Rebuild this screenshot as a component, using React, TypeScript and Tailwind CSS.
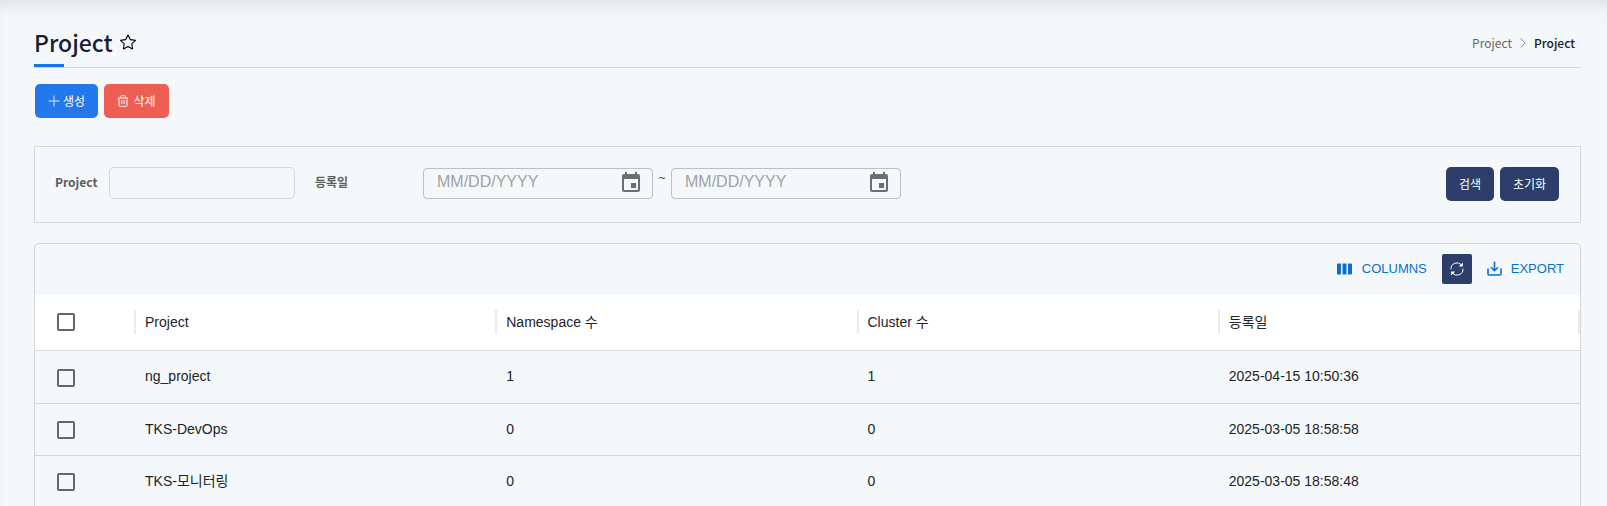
import type { ReactNode } from "react";
import { BsStar } from "react-icons/bs";
import { MdEvent } from "react-icons/md";

const kr = "font-['Noto_Sans_CJK_KR',sans-serif]";

const rows = [
  { name: "ng_project", namespaces: 1, clusters: 1, created: "2025-04-15 10:50:36" },
  { name: "TKS-DevOps", namespaces: 0, clusters: 0, created: "2025-03-05 18:58:58" },
  { name: "TKS-모니터링", namespaces: 0, clusters: 0, created: "2025-03-05 18:58:48" },
];

function Check({ label }: { label: string }) {
  return (
    <input
      type="checkbox"
      aria-label={label}
      className="ml-[22px] block size-[18px] appearance-none rounded-[2px] border-2 border-[#666666] bg-transparent checked:bg-[#0b6bcb]"
    />
  );
}

function DateField({ label }: { label: string }) {
  return (
    <div className="flex h-[31px] w-[230px] items-center rounded-[4px] border border-[#bcc0c3] pr-[9px] pb-px pl-[13px]">
      <input
        type="text"
        aria-label={label}
        placeholder="MM/DD/YYYY"
        className="min-w-0 flex-1 bg-transparent pb-[2px] text-[16px] leading-[20px] outline-none placeholder:text-[#a0a3a5]"
      />
      <button type="button" aria-label={`${label} 선택`} className="text-[#6c6f71]">
        <MdEvent className="size-6" />
      </button>
    </div>
  );
}

function HeadCell({ children }: { children: ReactNode }) {
  return (
    <th scope="col" className="p-0 text-left font-normal last:[&>div]:border-r-2">
      <div className="-ml-px flex h-6 items-center border-l-2 border-[#ececec] pl-[9px]">{children}</div>
    </th>
  );
}

export default function App() {
  return (
    <div className="min-h-screen bg-[#f4f8fb] font-['Liberation_Sans','Noto_Sans_CJK_KR',sans-serif] text-[14px] text-[#212427] shadow-[inset_0_12px_16px_-8px_rgba(0,0,0,0.1)]">
      <main className="h-screen overflow-hidden pt-[24px] pr-[26px] pl-[34px]">
        <header className={`${kr} flex h-[44px] items-end justify-between border-b border-[#d3d8dc]`}>
          <div className="relative flex h-[43px] items-center gap-[7px] pb-[8px]">
            <h1 className="text-[23px] leading-[34px] font-medium text-[#1a1c33]">Project</h1>
            <button type="button" aria-label="즐겨찾기" className="text-black">
              <BsStar className="size-[16px]" />
            </button>
            <span className="absolute bottom-0 left-0 h-[3px] w-[30px] bg-[#1573f0]" />
          </div>
          <nav aria-label="breadcrumb" className="flex h-[43px] items-center gap-[8px] pr-[6px] pb-[5px] text-[12px]">
            <a href="#project" className="text-[#666666]">Project</a>
            <svg viewBox="0 0 6 10" className="h-[10px] w-[6px]" fill="none" stroke="#888888">
              <path d="M.6.4 5.2 5 .6 9.6" />
            </svg>
            <span className="font-medium text-[#222222]">Project</span>
          </nav>
        </header>

        <div className={`${kr} mt-[16px] ml-px flex gap-[6px] text-[12px] text-white`}>
          <button type="button" className="flex h-[34px] w-[63px] items-center justify-center gap-[3px] rounded-[5px] bg-[#2478ee]">
            <svg viewBox="0 0 12 12" className="size-[12px]" fill="none" stroke="currentColor" strokeWidth=".8">
              <path d="M6 .5v11M.5 6h11" />
            </svg>
            생성
          </button>
          <button type="button" className="flex h-[34px] w-[65px] items-center justify-center gap-[4px] rounded-[5px] bg-[#ee5e52]">
            <svg viewBox="0 0 12 12" className="size-[12px]" fill="none" stroke="currentColor" strokeLinejoin="round">
              <path d="M.8 3h10.4M3.6 2.8V1.6q0-1 1-1h2.8q1 0 1 1v1.2M2 3v7.2q0 1.2 1.2 1.2h5.6q1.2 0 1.2-1.2V3M4.8 5.2v4M7.2 5.2v4" />
            </svg>
            삭제
          </button>
        </div>

        <form className={`${kr} mt-[28px] flex h-[77px] items-start border border-[#d5d8da] pt-[20px] pr-[21px] pl-[20px] text-[12px]`}>
          <label htmlFor="project" className="mt-[5px] w-[54px] leading-[20px] font-bold text-[#5b5e60]">Project</label>
          <input id="project" type="text" className="h-[32px] w-[186px] rounded-[5px] border border-[#d5d8da] bg-transparent px-2 outline-none" />
          <span className="mt-[5px] ml-[20px] w-[108px] leading-[20px] font-bold text-[#5b5e60]">등록일</span>
          <div className="mt-px flex font-['Liberation_Sans','Noto_Sans_CJK_KR',sans-serif]">
            <DateField label="시작일" />
            <span className="w-[18px] text-center leading-[20px] text-[#444444]">~</span>
            <DateField label="종료일" />
          </div>
          <div className="ml-auto flex gap-[6px] text-white">
            <button type="submit" className="h-[34px] w-[48px] rounded-[5px] bg-[#2c3e69]">검색</button>
            <button type="reset" className="h-[34px] w-[59px] rounded-[5px] bg-[#2c3e69]">초기화</button>
          </div>
        </form>

        <section className="mt-[20px] overflow-hidden rounded-t-[5px] border border-b-0 border-[#d5d8da]">
          <div className="flex h-[51px] items-center justify-end gap-[15px] pr-[16px] pb-[2px] text-[13px] text-[#0a70cc]">
            <button type="button" className="flex items-center gap-[10px]">
              <svg viewBox="0 0 15 12" className="h-[12px] w-[15px]" fill="currentColor">
                <path d="M1 .5h3v11H1q-1 0-1-1v-9q0-1 1-1ZM5.5.5h4v11h-4ZM11 .5h3q1 0 1 1v9q0 1-1 1h-3Z" />
              </svg>
              COLUMNS
            </button>
            <button type="button" aria-label="새로고침" className="flex size-[30px] items-center justify-center rounded-[2px] bg-[#2c3e69] text-white">
              <svg viewBox="0 0 14 14" className="size-[14px]" fill="none" stroke="currentColor">
                <path d="M1 7.2A6 6 0 0 1 11.6 3M13 6.8A6 6 0 0 1 2.4 11" />
                <path d="M12.8.6v4H8.8ZM1.2 13.4v-4h4Z" fill="currentColor" stroke="none" />
              </svg>
            </button>
            <button type="button" className="flex items-center gap-[9px]">
              <svg viewBox="0 0 15 15" className="size-[15px]" fill="none" stroke="currentColor" strokeWidth="1.6">
                <path d="M1 7.5V13q0 1 1 1h11q1 0 1-1V7.5M7.5.5v9M4 6.3l3.5 3.4L11 6.3" />
              </svg>
              EXPORT
            </button>
          </div>
          <table className="w-full table-fixed border-collapse">
            <colgroup>
              <col className="w-[100px]" />
              <col />
              <col />
              <col />
              <col />
            </colgroup>
            <thead>
              <tr className="h-[55px] border-b border-[#d5d8da] bg-white">
                <th scope="col" className="p-0"><Check label="모두 선택" /></th>
                <HeadCell>Project</HeadCell>
                <HeadCell>Namespace 수</HeadCell>
                <HeadCell>Cluster 수</HeadCell>
                <HeadCell>등록일</HeadCell>
              </tr>
            </thead>
            <tbody>
              {rows.map((row) => (
                <tr key={row.name} className="h-[52px] border-b border-[#d5d8da] first:h-[53px]">
                  <td className="px-0 pt-[2px] pb-0"><Check label={row.name} /></td>
                  <td className="px-[10px] py-0">{row.name}</td>
                  <td className="px-[10px] py-0">{row.namespaces}</td>
                  <td className="px-[10px] py-0">{row.clusters}</td>
                  <td className="px-[10px] py-0">{row.created}</td>
                </tr>
              ))}
            </tbody>
          </table>
        </section>
      </main>
    </div>
  );
}
